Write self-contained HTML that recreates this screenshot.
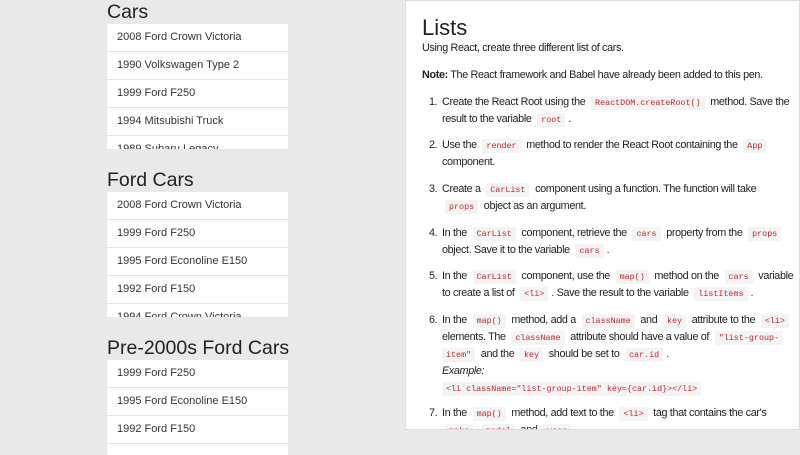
<!DOCTYPE html>
<html><head><meta charset="utf-8"><style>
*{margin:0;padding:0;box-sizing:border-box}
body{width:800px;height:450px;overflow:hidden;background:#e9e9e9;font-family:"Liberation Sans",sans-serif;color:#222;position:relative}
h2{position:absolute;left:107px;font-weight:normal;font-size:19.5px;color:#222;line-height:24px}
.lg{position:absolute;left:107px;width:181px;background:#fff;overflow:hidden}
.lg div{height:28px;border-bottom:1px solid #e6e6e6;font-size:11px;line-height:27px;padding-left:10px;color:#333}
.panel{position:absolute;left:405px;top:0;width:395px;height:430px;background:#fff;border:1px solid #ddd;overflow:hidden}
.panel .l{position:absolute;left:16px;font-size:10.8px;letter-spacing:-0.35px;white-space:nowrap;color:#222}
.n{position:absolute;left:-13px}
code{font-family:"Liberation Mono",monospace;font-size:8.4px;letter-spacing:0;color:#c0262d;background:#f4f4f4;padding:2px 4px;margin:0 3px}
</style></head><body>
<h2 style="top:0">Cars</h2>
<div class="lg" style="top:24px;height:125px"><div>2008 Ford Crown Victoria</div><div>1990 Volkswagen Type 2</div><div>1999 Ford F250</div><div>1994 Mitsubishi Truck</div><div>1989 Subaru Legacy</div></div>
<h2 style="top:168px">Ford Cars</h2>
<div class="lg" style="top:192px;height:125px"><div>2008 Ford Crown Victoria</div><div>1999 Ford F250</div><div>1995 Ford Econoline E150</div><div>1992 Ford F150</div><div>1994 Ford Crown Victoria</div></div>
<h2 style="top:336px">Pre-2000s Ford Cars</h2>
<div class="lg" style="top:360px;height:95px"><div>1999 Ford F250</div><div>1995 Ford Econoline E150</div><div>1992 Ford F150</div><div></div></div>
<div class="panel">
<div class="l" style="top:14px;font-size:22px;letter-spacing:0">Lists</div>
<div class="l" style="top:41px">Using React, create three different list of cars.</div>
<div class="l" style="top:68px"><b>Note:</b> The React framework and Babel have already been added to this pen.</div>
<div style="position:absolute;left:20px;top:0">
<div class="l" style="top:95px"><span class="n">1.</span>Create the React Root using the <code>ReactDOM.createRoot()</code> method. Save the</div>
<div class="l" style="top:112px">result to the variable <code>root</code>.</div>
<div class="l" style="top:138px"><span class="n">2.</span>Use the <code>render</code> method to render the React Root containing the <code>App</code></div>
<div class="l" style="top:155px">component.</div>
<div class="l" style="top:182px"><span class="n">3.</span>Create a <code>CarList</code> component using a function. The function will take</div>
<div class="l" style="top:199px"><code>props</code> object as an argument.</div>
<div class="l" style="top:226px"><span class="n">4.</span>In the <code>CarList</code> component, retrieve the <code>cars</code> property from the <code>props</code></div>
<div class="l" style="top:243px">object. Save it to the variable <code>cars</code>.</div>
<div class="l" style="top:269px"><span class="n">5.</span>In the <code>CarList</code> component, use the <code>map()</code> method on the <code>cars</code> variable</div>
<div class="l" style="top:286px">to create a list of <code>&lt;li&gt;</code>. Save the result to the variable <code>listItems</code>.</div>
<div class="l" style="top:313px"><span class="n">6.</span>In the <code>map()</code> method, add a <code>className</code> and <code>key</code> attribute to the <code>&lt;li&gt;</code></div>
<div class="l" style="top:330px">elements. The <code>className</code> attribute should have a value of <code>"list-group-</code></div>
<div class="l" style="top:347px"><code style="margin-left:0">item"</code> and the <code>key</code> should be set to <code>car.id</code>.</div>
<div class="l" style="top:364px"><i>Example:</i></div>
<div class="l" style="top:381px"><code style="margin-left:0">&lt;li className="list-group-item" key={car.id}&gt;&lt;/li&gt;</code></div>
<div class="l" style="top:406px"><span class="n">7.</span>In the <code>map()</code> method, add text to the <code>&lt;li&gt;</code> tag that contains the car's</div>
<div class="l" style="top:423px"><code>make</code> <code>model</code> and <code>year</code></div>
</div>
</div>
</body></html>
